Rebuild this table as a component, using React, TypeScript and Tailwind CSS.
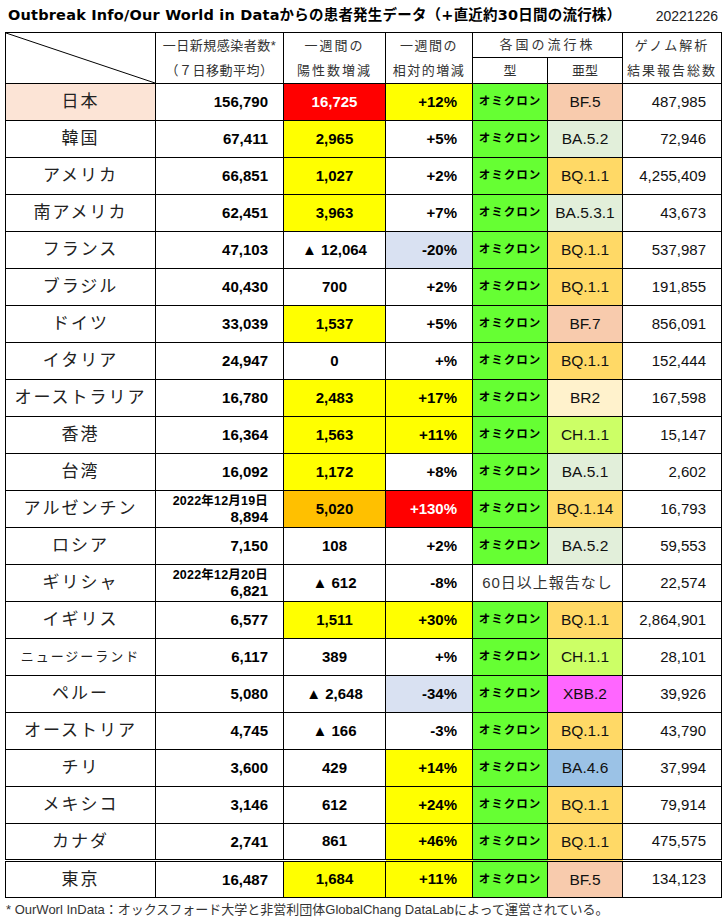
import React from 'react';

type Row = {
  name: string;
  small?: boolean;
  date?: string;
  daily: string;
  week: string;
  weekBg?: string;
  rel: string;
  relBg?: string;
  sub?: string;
  subBg?: string;
  genome: string;
};

const RED = 'bg-[#ff0000] text-white';
const YEL = 'bg-[#ffff00]';
const ORG = 'bg-[#ffc000]';
const BLU = 'bg-[#d9e1f2]';

const BF = 'bg-[#f8cbad]';
const BA = 'bg-[#e2efda]';
const BQ = 'bg-[#ffd966]';
const BR = 'bg-[#fff2cc]';
const CH = 'bg-[#ccff66]';
const XB = 'bg-[#ff66ff]';
const B46 = 'bg-[#9bc2e6]';

const rows: Row[] = [
  { name: '韓国', daily: '67,411', week: '2,965', weekBg: YEL, rel: '+5%', sub: 'BA.5.2', subBg: BA, genome: '72,946' },
  { name: 'アメリカ', daily: '66,851', week: '1,027', weekBg: YEL, rel: '+2%', sub: 'BQ.1.1', subBg: BQ, genome: '4,255,409' },
  { name: '南アメリカ', daily: '62,451', week: '3,963', weekBg: YEL, rel: '+7%', sub: 'BA.5.3.1', subBg: BA, genome: '43,673' },
  { name: 'フランス', daily: '47,103', week: '▲ 12,064', rel: '-20%', relBg: BLU, sub: 'BQ.1.1', subBg: BQ, genome: '537,987' },
  { name: 'ブラジル', daily: '40,430', week: '700', rel: '+2%', sub: 'BQ.1.1', subBg: BQ, genome: '191,855' },
  { name: 'ドイツ', daily: '33,039', week: '1,537', weekBg: YEL, rel: '+5%', sub: 'BF.7', subBg: BF, genome: '856,091' },
  { name: 'イタリア', daily: '24,947', week: '0', rel: '+%', sub: 'BQ.1.1', subBg: BQ, genome: '152,444' },
  { name: 'オーストラリア', daily: '16,780', week: '2,483', weekBg: YEL, rel: '+17%', relBg: YEL, sub: 'BR2', subBg: BR, genome: '167,598' },
  { name: '香港', daily: '16,364', week: '1,563', weekBg: YEL, rel: '+11%', relBg: YEL, sub: 'CH.1.1', subBg: CH, genome: '15,147' },
  { name: '台湾', daily: '16,092', week: '1,172', weekBg: YEL, rel: '+8%', sub: 'BA.5.1', subBg: BA, genome: '2,602' },
  { name: 'アルゼンチン', date: '2022年12月19日', daily: '8,894', week: '5,020', weekBg: ORG, rel: '+130%', relBg: RED, sub: 'BQ.1.14', subBg: BQ, genome: '16,793' },
  { name: 'ロシア', daily: '7,150', week: '108', rel: '+2%', sub: 'BA.5.2', subBg: BA, genome: '59,553' },
  { name: 'ギリシャ', date: '2022年12月20日', daily: '6,821', week: '▲ 612', rel: '-8%', genome: '22,574' },
  { name: 'イギリス', daily: '6,577', week: '1,511', weekBg: YEL, rel: '+30%', relBg: YEL, sub: 'BQ.1.1', subBg: BQ, genome: '2,864,901' },
  { name: 'ニュージーランド', small: true, daily: '6,117', week: '389', rel: '+%', sub: 'CH.1.1', subBg: CH, genome: '28,101' },
  { name: 'ペルー', daily: '5,080', week: '▲ 2,648', rel: '-34%', relBg: BLU, sub: 'XBB.2', subBg: XB, genome: '39,926' },
  { name: 'オーストリア', daily: '4,745', week: '▲ 166', rel: '-3%', sub: 'BQ.1.1', subBg: BQ, genome: '43,790' },
  { name: 'チリ', daily: '3,600', week: '429', rel: '+14%', relBg: YEL, sub: 'BA.4.6', subBg: B46, genome: '37,994' },
  { name: 'メキシコ', daily: '3,146', week: '612', rel: '+24%', relBg: YEL, sub: 'BQ.1.1', subBg: BQ, genome: '79,914' },
  { name: 'カナダ', daily: '2,741', week: '861', rel: '+46%', relBg: YEL, sub: 'BQ.1.1', subBg: BQ, genome: '475,575' },
];

const japan: Row = { name: '日本', daily: '156,790', week: '16,725', weekBg: RED, rel: '+12%', relBg: YEL, sub: 'BF.5', subBg: BF, genome: '487,985' };
const tokyo: Row = { name: '東京', daily: '16,487', week: '1,684', weekBg: YEL, rel: '+11%', relBg: YEL, sub: 'BF.5', subBg: BF, genome: '134,123' };

const cell = 'border border-black p-0';
const jp = "font-['Liberation_Sans','Noto_Sans_CJK_JP',sans-serif]";

const DataRow = ({ r, nameBg = 'bg-white', top = '' }: { r: Row; nameBg?: string; top?: string }) => (
  <tr className="h-[37px]">
    <td className={`${cell} ${top} ${nameBg} text-center text-[#222] ${r.small ? 'text-[13px] tracking-[2px]' : 'text-[17px] tracking-[2px]'}`}>
      {r.name}
    </td>
    <td className={`${cell} ${top} pr-[15px] text-right font-bold text-black`}>
      {r.date ? (
        <div className="flex flex-col items-end leading-[16px]">
          <span className="text-[12.5px] tracking-[0.2px]">{r.date}</span>
          <span className="text-[15px]">{r.daily}</span>
        </div>
      ) : (
        <span className="text-[15px]">{r.daily}</span>
      )}
    </td>
    <td className={`${cell} ${top} ${r.weekBg ?? 'bg-white'} text-center text-[15px] font-bold`}>{r.week}</td>
    <td className={`${cell} ${top} ${r.relBg ?? 'bg-white'} pr-[15px] text-right text-[15px] font-bold`}>{r.rel}</td>
    {r.sub ? (
      <>
        <td className={`${cell} ${top} bg-[#66ff33] text-center text-[11.5px] font-bold tracking-[1px]`}>オミクロン</td>
        <td className={`${cell} ${top} ${r.subBg} text-center text-[15.5px] text-[#111]`}>{r.sub}</td>
      </>
    ) : (
      <td colSpan={2} className={`${cell} ${top} bg-white text-center text-[15px] tracking-[1px] text-[#333]`}>
        60日以上報告なし
      </td>
    )}
    <td className={`${cell} ${top} bg-white pr-[15px] text-right text-[15px] text-[#111]`}>{r.genome}</td>
  </tr>
);

const App = () => {
  return (
    <div className={`${jp} w-[726px] h-[922px] bg-white text-black`}>
      <div className="flex h-[32px] items-center justify-between pl-[8px] pr-[8px]">
        <h1 className="font-['DejaVu_Sans','Noto_Sans_CJK_JP',sans-serif] text-[14.5px] font-bold tracking-[0.2px]">
          Outbreak Info/Our World in Dataからの患者発生データ（+直近約30日間の流行株）
        </h1>
        <span className="text-[14px] text-[#222]">20221226</span>
      </div>
      <table className="ml-[5px] w-[716px] table-fixed border-collapse">
        <colgroup>
          <col className="w-[150px]" />
          <col className="w-[128px]" />
          <col className="w-[102px]" />
          <col className="w-[87px]" />
          <col className="w-[75px]" />
          <col className="w-[75px]" />
          <col className="w-[99px]" />
        </colgroup>
        <thead className="text-[13px] font-normal text-[#333]">
          <tr className="h-[25px]">
            <th rowSpan={2} className={`${cell} relative`}>
              <svg className="absolute inset-0 h-full w-full" preserveAspectRatio="none" viewBox="0 0 100 100">
                <line x1="0" y1="0" x2="100" y2="100" stroke="black" strokeWidth="1" vectorEffect="non-scaling-stroke" />
              </svg>
            </th>
            <th rowSpan={2} className={`${cell} font-normal tracking-[0.5px] leading-[25px]`}>
              <div>一日新規感染者数*</div>
              <div>（７日移動平均）</div>
            </th>
            <th rowSpan={2} className={`${cell} font-normal tracking-[2px] leading-[25px]`}>
              <div>一週間の</div>
              <div>陽性数増減</div>
            </th>
            <th rowSpan={2} className={`${cell} font-normal tracking-[1.5px] leading-[25px]`}>
              <div>一週間の</div>
              <div>相対的増減</div>
            </th>
            <th colSpan={2} className={`${cell} font-normal tracking-[3px]`}>各国の流行株</th>
            <th rowSpan={2} className={`${cell} font-normal tracking-[2px] leading-[25px]`}>
              <div>ゲノム解析</div>
              <div>結果報告総数</div>
            </th>
          </tr>
          <tr className="h-[26px]">
            <th className={`${cell} font-normal`}>型</th>
            <th className={`${cell} font-normal`}>亜型</th>
          </tr>
        </thead>
        <tbody>
          <DataRow r={japan} nameBg="bg-[#fce4d6]" />
          {rows.map((r) => (
            <DataRow key={r.name} r={r} />
          ))}
          <DataRow r={tokyo} top="border-t-[3px] border-t-black border-double" />
        </tbody>
      </table>
      <p className="mt-[2px] pl-[6px] text-[13px] text-[#333]">
        * OurWorl InData：オックスフォード大学と非営利団体GlobalChang DataLabによって運営されている。
      </p>
    </div>
  );
};

export default App;
